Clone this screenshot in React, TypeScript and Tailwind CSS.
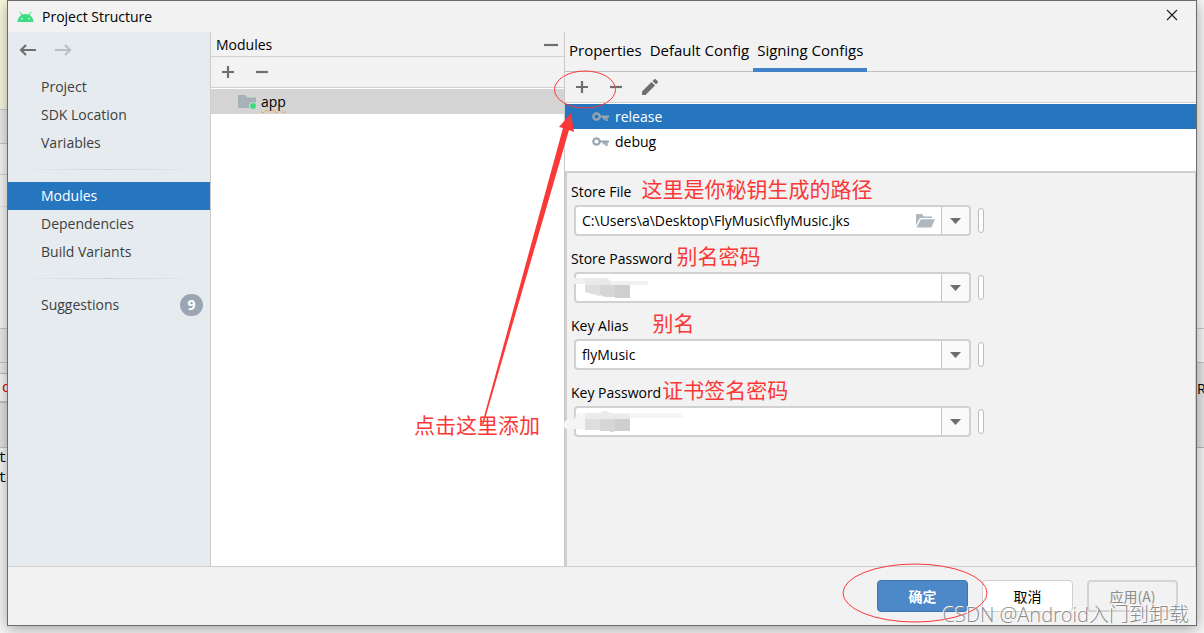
import { useState } from "react";
import clsx from "clsx";

const navGroups = [
  [{ name: "Project" }, { name: "SDK Location" }, { name: "Variables" }],
  [{ name: "Modules" }, { name: "Dependencies" }, { name: "Build Variants" }],
  [{ name: "Suggestions", count: 9 }],
];

const tabs = ["Properties", "Default Config", "Signing Configs"];
const configs = ["release", "debug"];

const fields = [
  { id: "storeFile", label: "Store File", value: "C:\\Users\\a\\Desktop\\FlyMusic\\flyMusic.jks", note: "这里是你秘钥生成的路径", gap: "ml-[10px]", browse: true },
  { id: "storePassword", label: "Store Password", value: "", note: "别名密码", gap: "ml-1", mask: "store" },
  { id: "keyAlias", label: "Key Alias", value: "flyMusic", note: "别名", gap: "ml-6" },
  { id: "keyPassword", label: "Key Password", value: "", note: "证书签名密码", gap: "ml-px", mask: "key" },
];

const AndroidIcon = () => (
  <svg width="17" height="12" viewBox="0 0 17 12" aria-hidden="true">
    <path d="M3 1l2 3.2M14 1l-2 3.2" stroke="#3ddc84" strokeWidth="1" strokeLinecap="round" />
    <path d="M.5 11C.8 6 4 3 8.500 3s7.700 3 8 8z" fill="#3ddc84" />
    <circle cx="4.800" cy="7.700" r=".8" fill="#fff" />
    <circle cx="12.200" cy="7.700" r=".8" fill="#fff" />
  </svg>
);

const ArrowIcon = ({ flip }: { flip?: boolean }) => (
  <svg width="18" height="14" viewBox="0 0 18 14" fill="none" stroke="currentColor" strokeWidth="2.200" className={flip ? "rotate-180" : ""} aria-hidden="true">
    <path d="M17 7H2.500M7 2L2 7l5 5" />
  </svg>
);

const PlusIcon = () => (
  <svg width="14" height="14" viewBox="0 0 14 14" aria-hidden="true">
    <path d="M1 7h12M7 1v12" stroke="#6e6e6e" strokeWidth="2.200" />
  </svg>
);

const MinusIcon = ({ size = 14 }: { size?: number }) => (
  <svg width={size} height="14" viewBox={`0 0 ${size} 14`} aria-hidden="true">
    <path d={`M1 7h${size - 2}`} stroke="#6e6e6e" strokeWidth="2.200" />
  </svg>
);

const PencilIcon = () => (
  <svg width="18" height="18" viewBox="0 0 18 18" fill="#6e6e6e" aria-hidden="true">
    <path d="M1 13.500L10.500 4l3.500 3.500L4.500 17H1z" />
    <path d="M11.500 3L13 1.500q1-1 2 0L16.500 3q1 1 0 2L15 6.500z" />
  </svg>
);

const KeyIcon = () => (
  <svg width="17" height="10" viewBox="0 0 17 10" fill="none" stroke="#9aa7b0" aria-hidden="true">
    <circle cx="4.500" cy="4.500" r="3.200" strokeWidth="2.200" />
    <path d="M8 4.500h9M14.500 4.500v4.500M12 4.500v3" strokeWidth="2.200" />
  </svg>
);

const ModuleIcon = () => (
  <svg width="19" height="16" viewBox="0 0 19 16" aria-hidden="true">
    <path d="M0 1h7l2.500 2.500H18V14H0z" fill="#a6b1b8" />
    <circle cx="15" cy="12" r="4" fill="#d4d4d4" />
    <circle cx="15" cy="12" r="3" fill="#3ddc84" />
  </svg>
);

const FolderOpenIcon = () => (
  <svg width="19" height="14" viewBox="0 0 19 14" fill="#afb8be" aria-hidden="true">
    <path d="M0 0h6l2 2.500h8V4H4L0 11.500z" />
    <path d="M4.800 5.200H19L15.300 13.500H.5z" />
  </svg>
);

// blurred-out password blocks
const Mask = ({ kind }: { kind: string }) => (
  <svg width="130" height="24" viewBox="0 0 130 24" className="pointer-events-none absolute -left-[15px] top-[3px]" aria-hidden="true">
    {kind === "store" ? (
      <>
        <path d="M13 1h30l6 3h36q4 1 1 4H26v-1H13q-4-3 0-6z" fill="#f0f0f0" />
        <path d="M24 1h22l4 3v4H24z" fill="#e9e9e9" />
        <path d="M24 8h15v11l-15-4z" fill="#dedede" />
        <path d="M39 8h15v12H44l-5-2z" fill="#d6d6d6" />
        <path d="M54 8h15v13H54z" fill="#cfcfcf" />
      </>
    ) : (
      <>
        <path d="M5 9h8l3-7h100q5 0 6 5H69v2H24v9H5q-5-4 0-9z" fill="#f5f5f5" />
        <path d="M24 2h15q5-4 10 0l5 1h15v5H24z" fill="#ebebeb" />
        <path d="M24 8h15v11H24z" fill="#dedede" />
        <path d="M39 8h15v12q-4 2-6 0h-9z" fill="#d6d6d6" />
        <path d="M54 8h15v12H54z" fill="#cfcfcf" />
      </>
    )}
  </svg>
);

const EditorLeft = () => (
  <div className="w-[7px] shrink-0 overflow-hidden bg-[#f7f7f7] font-['Liberation_Mono',monospace] text-sm leading-5">
    <div className="h-[110px] border-b border-[#c9c9c9] bg-[#fafae0]" />
    <div className="h-[34px] border-b border-[#c9c9c9] bg-[#ececec]" />
    <div className="h-[31px] border-b border-[#d5d5d5]" />
    <div className="h-8 border-b border-[#e6e6e6]" />
    <div className="h-[122px] border-b border-[#c4c4c4]" />
    <div className="h-[34px] border-b border-[#c4c4c4] bg-[#ececec]" />
    <div className="h-[11px] border-b border-[#bdbdbd] bg-[#ececec]" />
    <div className="h-[29px] border-b-2 border-[#c4c4c4] pl-[2px] pt-1 text-[#e00000]">c</div>
    <div className="h-[45px] border-b border-[#c4c4c4] bg-[#e4e4e4]" />
    <div className="flex justify-end">tt</div>
    <div className="flex justify-end">tt</div>
  </div>
);

const EditorRight = () => (
  <div className="w-[7px] shrink-0 overflow-hidden bg-[#f7f7f7] text-sm leading-5">
    <div className="h-[329px] border-b border-[#c9c9c9]" />
    <div className="h-[34px] border-b border-[#c4c4c4]" />
    <div className="h-[85px] border-b border-[#b9b9b9] bg-[#e6e6e6] pt-4">Re</div>
  </div>
);

const Sidebar = () => {
  const [active, setActive] = useState("Modules");

  return (
    <nav className="w-[203px] shrink-0 border-r border-[#cdcdcd] bg-[#e6ebef] text-[#3c3f41]">
      <div className="mb-[5px] flex h-9 items-center gap-[17px] pl-[11px]">
        <button aria-label="Back" className="text-[#6e6e6e]"><ArrowIcon /></button>
        <button aria-label="Forward" disabled className="text-[#bcbfc1]"><ArrowIcon flip /></button>
      </div>
      {navGroups.map((group, i) => (
        <div key={i}>
          {i > 0 && <div className="mx-2 my-3 h-px bg-linear-to-r from-transparent via-[#d3d3d3] to-transparent" />}
          {group.map((item: { name: string; count?: number }) => (
            <button
              key={item.name}
              onClick={() => setActive(item.name)}
              className={clsx("flex h-7 w-full items-center justify-between pl-[33px] pr-[7px]", active === item.name && "bg-[#2675bf] text-white")}
            >
              {item.name}
              {item.count && (
                <span className="flex h-[22px] w-[23px] items-center justify-center rounded-full bg-[#9aa7b3] text-sm font-bold text-white">{item.count}</span>
              )}
            </button>
          ))}
        </div>
      ))}
    </nav>
  );
};

const ModulesPanel = () => (
  <section className="flex w-[354px] shrink-0 flex-col border-r border-[#c9c9c9] bg-white">
    <div className="flex h-[25px] items-center justify-between border-b border-[#d1d1d1] bg-[#f2f2f2] pl-[5px] pr-[5px] pt-px">
      <h2>Modules</h2>
      <button aria-label="Hide"><MinusIcon size={16} /></button>
    </div>
    <div className="flex h-[31px] border-b border-[#d1d1d1] bg-[#f2f2f2]">
      <button aria-label="Add module" className="flex w-[34px] items-center justify-center"><PlusIcon /></button>
      <button aria-label="Remove module" className="flex w-[34px] items-center justify-center"><MinusIcon /></button>
    </div>
    <div className="mt-px flex h-[25px] items-center gap-1 bg-[#d4d4d4] pl-[27px] text-black">
      <ModuleIcon />
      <span className="underline decoration-[#eaa54a] decoration-wavy decoration-1 underline-offset-2">app</span>
    </div>
  </section>
);

const AddHint = () => (
  <div className="pointer-events-none absolute -left-[155px] -top-[2px] z-10 h-[370px] w-[210px]">
    <svg width="210" height="370" viewBox="0 0 210 370" className="absolute inset-0" aria-hidden="true">
      <ellipse cx="175" cy="19.500" rx="30.500" ry="18.500" fill="none" stroke="#fb3838" />
      <path d="M72 354L153 58l-4-1 12-14 3 19-5-2L73.500 354z" fill="#fb3838" />
    </svg>
    <span className="absolute bottom-px left-1 whitespace-nowrap font-['Noto_Sans_CJK_SC',sans-serif] text-[21px] leading-[30px] text-[#fb3838]">点击这里添加</span>
  </div>
);

const SigningPanel = () => {
  const [tab, setTab] = useState("Signing Configs");
  const [config, setConfig] = useState("release");

  return (
    <section className="flex min-w-0 flex-1 flex-col text-black">
      <div className="flex h-10 border-b border-[#bfbfbf] text-[15px]">
        {tabs.map((t) => (
          <button key={t} onClick={() => setTab(t)} className={clsx("-mb-px whitespace-nowrap border-b-4 px-1 pt-[2px]", tab === t ? "border-[#4083c9]" : "border-transparent")}>{t}</button>
        ))}
      </div>
      <div className="relative flex h-[31px] shrink-0 border-b border-[#d1d1d1]">
        <button aria-label="Add config" className="flex w-[34px] items-center justify-center"><PlusIcon /></button>
        <button aria-label="Remove config" className="flex w-[34px] items-center justify-center"><MinusIcon /></button>
        <button aria-label="Rename config" className="flex w-[34px] items-center justify-center"><PencilIcon /></button>
        <AddHint />
      </div>
      <div className="h-[68px] shrink-0 bg-white pt-px">
        {configs.map((c) => (
          <button
            key={c}
            onClick={() => setConfig(c)}
            className={clsx("flex h-[25px] w-full items-center gap-[6px] pl-[27px]", config === c && "bg-[#2675bf] text-white")}
          >
            <KeyIcon />
            {c}
          </button>
        ))}
      </div>
      <form className="flex-1 border-l-2 border-r border-t-2 border-[#cfcfcf] pl-1 pt-[6px]">
        {fields.map((f) => (
          <div key={f.id} className="mb-[10px]">
            <div className="flex h-[26px] items-center">
              <label htmlFor={f.id}>{f.label}</label>
              <span className={clsx("mb-2 font-['Noto_Sans_CJK_SC',sans-serif] text-[21px] leading-6 text-[#fb3838]", f.gap)}>{f.note}</span>
            </div>
            <div className="flex items-center gap-[7px] pl-[3px]">
              <div className="relative flex h-[31px] w-[397px] rounded border-2 border-[#d1d1d1] bg-white">
                <input id={f.id} defaultValue={f.value} className="min-w-0 flex-1 rounded-l bg-transparent pl-[6px] outline-none" />
                {f.browse && <button type="button" aria-label="Browse" className="pr-[6px]"><FolderOpenIcon /></button>}
                <button type="button" aria-label={`${f.label} options`} className="flex w-7 items-center justify-center rounded-r border-l border-[#c4c4c4] bg-[#fafafa]">
                  <svg width="11" height="6" viewBox="0 0 11 6" aria-hidden="true"><path d="M0 0h11L5.500 6z" fill="#6e6e6e" /></svg>
                </button>
                {f.mask && <Mask kind={f.mask} />}
              </div>
              <div className="h-[25px] w-[6px] rounded-full border border-[#bcbcbc] bg-white" />
            </div>
          </div>
        ))}
      </form>
    </section>
  );
};

const Footer = () => (
  <footer className="relative flex h-[59px] shrink-0 items-center justify-end gap-[14px] border-t border-[#cdcdcd] pr-[18px] font-['Noto_Sans_CJK_SC',sans-serif] text-sm">
    <div className="relative">
      <button className="h-8 w-[91px] rounded border border-[#3b76b4] bg-[#4d89c9] font-bold text-white">确定</button>
      <svg width="146" height="60" viewBox="0 0 146 60" className="pointer-events-none absolute -left-[35px] -top-[17px] z-10" aria-hidden="true">
        <ellipse cx="73" cy="30" rx="72" ry="29" fill="none" stroke="#fb3838" />
      </svg>
    </div>
    <button className="h-8 w-[91px] rounded border border-[#cfcfcf] bg-white text-black">取消</button>
    <button disabled className="h-8 w-[91px] rounded border-2 border-[#d4d4d4] text-[#8c8c8c]">应用(A)</button>
    <span className="pointer-events-none absolute -bottom-1 right-[7px] z-20 whitespace-nowrap font-['Open_Sans','Noto_Sans_CJK_SC',sans-serif] text-xl font-light text-[#8c8c8c] [text-shadow:-1px_-1px_0_#ffffff]">CSDN @Android入门到卸载</span>
  </footer>
);

export default function App() {
  return (
    <div className="flex min-h-screen overflow-hidden bg-[#f7f7f7] font-['Open_Sans','Noto_Sans_CJK_SC',sans-serif] text-sm text-black">
      <EditorLeft />
      <main className="relative z-10 mb-[7px] flex min-w-0 flex-1 flex-col border border-[#6b6b6b] bg-[#f2f2f2] shadow-[0_3px_14px_rgba(0,0,0,0.35)]">
        <header className="flex h-[31px] shrink-0 items-center gap-2 pl-[9px] pr-[18px]">
          <AndroidIcon />
          <h1 className="flex-1">Project Structure</h1>
          <button aria-label="Close" className="pb-[3px]">
            <svg width="12" height="12" viewBox="0 0 12 12" aria-hidden="true"><path d="M1 1l10 10M11 1L1 11" stroke="#222" strokeWidth="1.200" /></svg>
          </button>
        </header>
        <div className="flex flex-1">
          <Sidebar />
          <ModulesPanel />
          <SigningPanel />
        </div>
        <Footer />
      </main>
      <EditorRight />
    </div>
  );
}
